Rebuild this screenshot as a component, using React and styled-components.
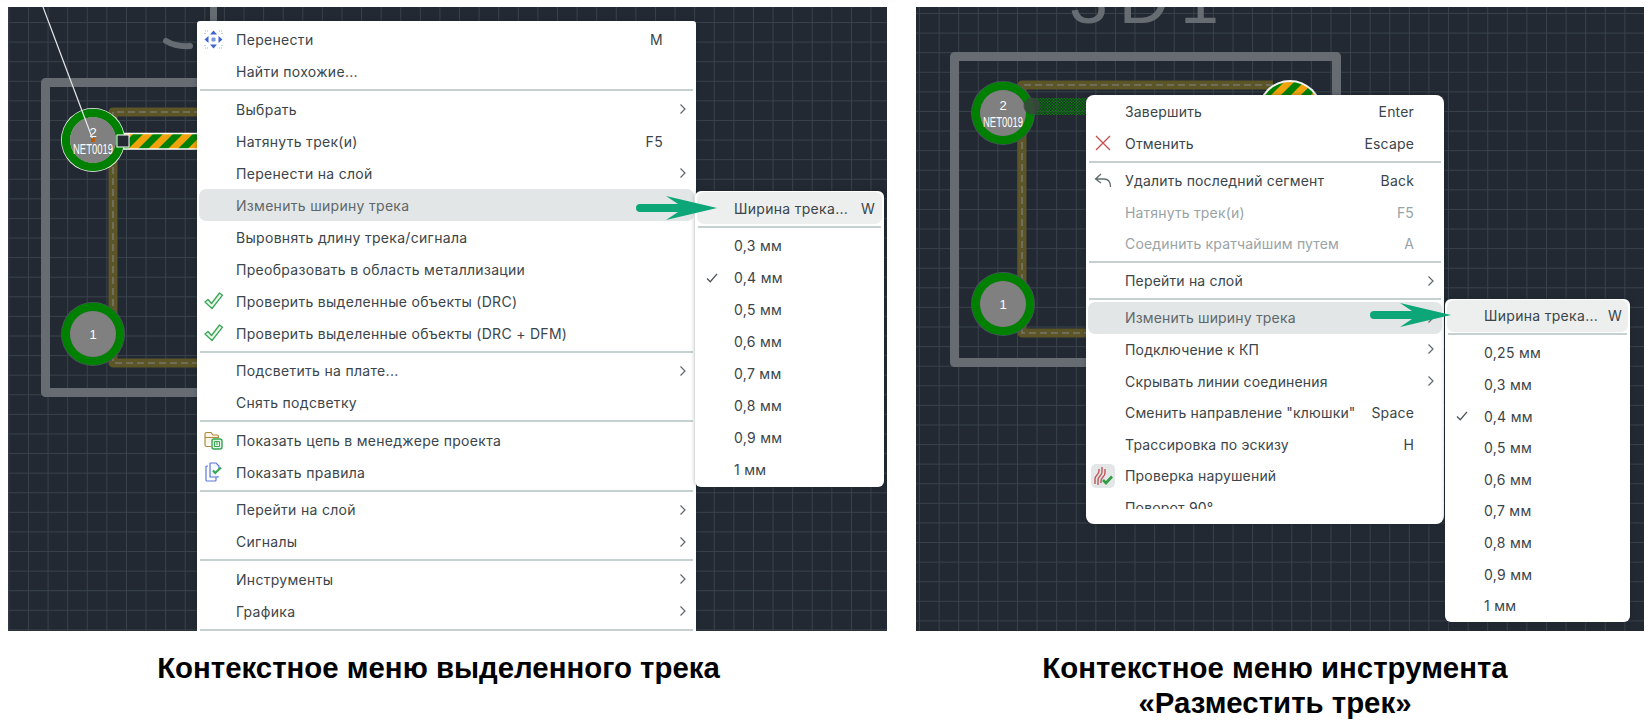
import React from "react";
import styled, { createGlobalStyle } from "styled-components";

const GlobalStyle = createGlobalStyle`
  html, body { margin: 0; padding: 0; background: #fff; }
  body { font-family: Inter, "Liberation Sans", sans-serif; }
`;

const Page = styled.div`
  display: flex;
  gap: 29px;
  width: 1648px;
  height: 725px;
  padding: 7px 4px 0 8px;
  box-sizing: border-box;
  overflow: hidden;
`;

const Panel = styled.section`
  display: flex;
  flex-direction: column;
  width: ${({ $width }) => $width}px;
  flex: none;
`;

const Canvas = styled.div`
  position: relative;
  height: 624px;
  overflow: hidden;
  background-color: #222933;
  background-image: linear-gradient(#39414a 1px, transparent 1px),
    linear-gradient(90deg, #39414a 1px, transparent 1px);
  background-size: 19.6px 19.6px;
  background-position: ${({ $grid }) => $grid};
`;

const BoardArt = styled.svg`
  position: absolute;
  inset: 0;
  width: 100%;
  height: 100%;
`;

const Caption = styled.h2`
  margin: 19px 0 0;
  padding-right: ${({ $shift }) => $shift}px;
  font: bold 29.4px/35px "Liberation Sans", Arial, sans-serif;
  color: #000;
  text-align: center;
`;

const MenuBox = styled.div`
  position: absolute;
  left: ${({ $x }) => $x}px;
  top: ${({ $y }) => $y}px;
  width: ${({ $w }) => $w}px;
  height: ${({ $h }) => ($h ? `${$h}px` : "auto")};
  padding: ${({ $padTop }) => $padTop}px 2px 1px;
  box-sizing: border-box;
  background: #fff;
  border-radius: ${({ $radius }) => $radius}px;
  box-shadow: 0 0 4px rgba(20, 30, 35, 0.35);
`;

const MenuScroll = styled.div`
  height: ${({ $h }) => ($h ? `${$h}px` : "auto")};
  overflow: hidden;
`;

const Row = styled.div`
  display: flex;
  align-items: center;
  height: ${({ $h }) => $h}px;
  font-size: 14px;
  letter-spacing: ${({ $tracking }) => $tracking}px;
  white-space: nowrap;
  border-radius: 7px;
  color: ${({ $disabled, $active }) =>
    $disabled ? "#9aa3a6" : $active === "hover" ? "#5e676b" : "#3b454a"};
  background: ${({ $active }) =>
    $active === "hover" ? "#e3e6e6" : $active === "open" ? "#edefef" : "transparent"};
`;

const IconSlot = styled.span`
  display: flex;
  align-items: center;
  justify-content: center;
  flex: none;
  width: 37px;
  padding-right: 8px;
  box-sizing: border-box;
`;

const Label = styled.span`
  flex: 1;
`;

const Shortcut = styled.span`
  margin-right: ${({ $right }) => $right}px;
`;

const ChevronSlot = styled.span`
  display: flex;
  justify-content: flex-end;
  flex: none;
  width: 30px;
  padding-right: 7px;
  box-sizing: border-box;
`;

const Divider = styled.div`
  height: 2px;
  margin: 1.75px 1px;
  background: #c5d1d0;
`;

const IconTile = styled.span`
  display: flex;
  align-items: center;
  justify-content: center;
  width: 24px;
  height: 24px;
  border-radius: 5px;
  background: #e4e7e7;
`;

const Chevron = () => (
  <svg width="8" height="12" viewBox="0 0 8 12">
    <path d="M1.5 1.5 L6 6 L1.5 10.5" fill="none" stroke="#5f686c" strokeWidth="1.2" />
  </svg>
);

const MoveIcon = () => (
  <svg width="19" height="19" viewBox="0 0 19 19">
    <path d="M9.5 0.5 L13 4.5 H6 Z M9.5 18.5 L13 14.5 H6 Z M0.5 9.5 L4.5 6 V13 Z M18.5 9.5 L14.5 6 V13 Z" fill="#3f63d0" />
    <rect x="7.5" y="7.5" width="4" height="4" rx="1" fill="#7c93de" />
    <path d="M1 1 H4 M1 3 V4 M15 1 H18 M18 3 V4 M1 18 H4 M1 15 V16 M15 18 H18 M18 15 V16" stroke="#aab2c4" strokeWidth="1.2" strokeDasharray="1 1" />
  </svg>
);

const DrcIcon = () => (
  <svg width="20" height="18" viewBox="0 0 20 18">
    <path d="M1 10 L4 7.5 L7.5 11.5 L15.5 1 L18.5 3.2 L8 16.5 Z" fill="#e9f6ea" stroke="#3aa655" strokeWidth="1.3" strokeLinejoin="round" />
  </svg>
);

const FolderIcon = () => (
  <svg width="19" height="19" viewBox="0 0 19 19">
    <path d="M1 14 V3 Q1 1.5 2.5 1.5 H7 L9 4 H13 Q14.5 4 14.5 5.5 V7 M1 6.5 H14 M1 14 Q1 15.5 2.5 15.5 H7" fill="#fbf6ea" stroke="#b08a3c" strokeWidth="1.2" />
    <rect x="8" y="8" width="10" height="10" rx="2" fill="#e6f5e8" stroke="#35a853" strokeWidth="1.4" />
    <path d="M10.5 10.5 H15.5 V15.5 H10.5 Z M13 10.5 V14" fill="none" stroke="#35a853" strokeWidth="1" />
  </svg>
);

const RulesIcon = () => (
  <svg width="18" height="20" viewBox="0 0 18 20">
    <path d="M5 1 H11 L14 4 V7 M5 1 V15 H13 V14" fill="#f2f5fd" stroke="#5b78d8" strokeWidth="1.2" />
    <path d="M3 4 H2 Q1 4 1 5 V18 Q1 19 2 19 H10 Q11 19 11 18 V15" fill="none" stroke="#5b78d8" strokeWidth="1.2" />
    <path d="M8 8.5 L10.2 11 L16 5.5" fill="none" stroke="#35a853" strokeWidth="2.2" />
  </svg>
);

const CancelIcon = () => (
  <svg width="16" height="16" viewBox="0 0 16 16">
    <path d="M1 1 L15 15 M15 1 L1 15" stroke="#c9504f" strokeWidth="1.4" />
  </svg>
);

const UndoIcon = () => (
  <svg width="18" height="15" viewBox="0 0 18 15">
    <path d="M7 1 L1.5 6 L7 10 M1.5 6 H10 C14 6 16.5 9 16.5 14" fill="none" stroke="#5f6b6e" strokeWidth="1.3" />
  </svg>
);

const ViolationIcon = () => (
  <IconTile>
    <svg width="20" height="20" viewBox="0 0 20 20">
      <path d="M2 18 V13 Q2 11 4 9 Q6 7 6 5 V3 M5 19 V14 Q5 12 7 10 Q9 8 9 6 V1 M8 17 V15 Q8 13 10 11 Q12 9 12 7 V3" fill="none" stroke="#c0565a" strokeWidth="1.4" />
      <path d="M10 14 L13 17 L19 10.5" fill="none" stroke="#2f9e44" strokeWidth="2.6" />
    </svg>
  </IconTile>
);

const TickIcon = () => (
  <svg width="12" height="10" viewBox="0 0 13 11">
    <path d="M1 6 L4.6 9.5 L12 1" fill="none" stroke="#4e5659" strokeWidth="1.5" />
  </svg>
);

const Menu = ({ sections, x, y, w, h, padTop, radius, rowH, listH, right, tracking = 0.3 }) => (
  <MenuBox $x={x} $y={y} $w={w} $h={h} $padTop={padTop} $radius={radius}>
    <MenuScroll $h={listH}>
      {sections.map((rows, i) => (
        <React.Fragment key={i}>
          {i > 0 && <Divider />}
          {rows.map((row) => (
            <Row key={row.label} $h={rowH} $tracking={tracking} $active={row.active} $disabled={row.disabled}>
              <IconSlot>{row.icon}</IconSlot>
              <Label>{row.label}</Label>
              {row.key && <Shortcut $right={right}>{row.key}</Shortcut>}
              {row.more && <ChevronSlot><Chevron /></ChevronSlot>}
            </Row>
          ))}
        </React.Fragment>
      ))}
    </MenuScroll>
  </MenuBox>
);

const trackMenu = [
  [
    { label: "Перенести", icon: <MoveIcon />, key: "M" },
    { label: "Найти похожие..." },
  ],
  [
    { label: "Выбрать", more: true },
    { label: "Натянуть трек(и)", key: "F5" },
    { label: "Перенести на слой", more: true },
    { label: "Изменить ширину трека", active: "hover", more: true },
    { label: "Выровнять длину трека/сигнала" },
    { label: "Преобразовать в область металлизации" },
    { label: "Проверить выделенные объекты (DRC)", icon: <DrcIcon /> },
    { label: "Проверить выделенные объекты (DRC + DFM)", icon: <DrcIcon /> },
  ],
  [
    { label: "Подсветить на плате...", more: true },
    { label: "Снять подсветку" },
  ],
  [
    { label: "Показать цепь в менеджере проекта", icon: <FolderIcon /> },
    { label: "Показать правила", icon: <RulesIcon /> },
  ],
  [
    { label: "Перейти на слой", more: true },
    { label: "Сигналы", more: true },
  ],
  [
    { label: "Инструменты", more: true },
    { label: "Графика", more: true },
  ],
  [],
];

const toolMenu = [
  [
    { label: "Завершить", key: "Enter" },
    { label: "Отменить", icon: <CancelIcon />, key: "Escape" },
  ],
  [
    { label: "Удалить последний сегмент", icon: <UndoIcon />, key: "Back" },
    { label: "Натянуть трек(и)", key: "F5", disabled: true },
    { label: "Соединить кратчайшим путем", key: "A", disabled: true },
  ],
  [{ label: "Перейти на слой", more: true }],
  [
    { label: "Изменить ширину трека", active: "hover", more: true },
    { label: "Подключение к КП", more: true },
    { label: "Скрывать линии соединения", more: true },
    { label: 'Сменить направление "клюшки"', key: "Space" },
    { label: "Трассировка по эскизу", key: "H" },
    { label: "Проверка нарушений", icon: <ViolationIcon /> },
    { label: "Поворот 90°" },
  ],
];

const widthMenu = (sizes) => [
  [{ label: "Ширина трека...", key: "W", active: "open" }],
  sizes.map((size) => ({
    label: size,
    icon: size === "0,4 мм" ? <TickIcon /> : null,
  })),
];

const Pad = ({ x, y, ring, label, net }) => (
  <g>
    <circle cx={x} cy={y} r="32" fill={ring} />
    <circle cx={x} cy={y} r="27" fill="none" stroke="#008000" strokeWidth="8.5" />
    <circle cx={x} cy={y} r="23" fill="#808080" />
    <text
      x={x}
      y={net ? y - 3 : y + 5}
      fill="#fff"
      fontSize="13"
      fontFamily="Liberation Sans, sans-serif"
      textAnchor="middle"
    >
      {label}
    </text>
    {net && (
      <text
        x={x - 20}
        y={y + 14}
        fill="#fff"
        fontSize="15"
        fontFamily="Liberation Sans, sans-serif"
        textLength="40"
        lengthAdjust="spacingAndGlyphs"
      >
        {net}
      </text>
    )}
  </g>
);

const Patterns = () => (
  <defs>
    <pattern id="stripes" width="14" height="14" patternUnits="userSpaceOnUse" patternTransform="rotate(45)">
      <rect width="14" height="14" fill="#008000" />
      <rect width="7" height="14" fill="#f0a30a" />
    </pattern>
    <pattern id="checker" width="3" height="3" patternUnits="userSpaceOnUse">
      <rect width="1.5" height="1.5" fill="#008000" />
      <rect x="1.5" y="1.5" width="1.5" height="1.5" fill="#008000" />
    </pattern>
  </defs>
);

const OliveTrack = ({ d }) => (
  <g fill="none">
    <path d={d} stroke="#5c5527" strokeWidth="9" strokeLinejoin="round" />
    <path d={d} stroke="#77756a" strokeWidth="1.6" strokeDasharray="7 4" />
  </g>
);

const LeftBoard = () => (
  <BoardArt viewBox="8 7 879 624">
    <Patterns />
    <path d="M166 41 Q176 47 190 46" fill="none" stroke="#666c72" strokeWidth="6" strokeLinecap="round" />
    <rect x="210" y="7" width="7" height="14" fill="#666c72" />
    <rect x="45.5" y="82.5" width="300" height="310" fill="none" stroke="#666c72" strokeWidth="9" strokeLinejoin="round" />
    <OliveTrack d="M300 112 H113 V363 H300" />
    <rect x="116" y="133.5" width="100" height="15.5" fill="url(#stripes)" stroke="#fff" strokeWidth="1.5" />
    <Pad x={93} y={140} ring="#f4f4f4" label="2" net="NET0019" />
    <Pad x={93} y={334} ring="#4b5462" label="1" />
    <rect x="117" y="135" width="12" height="12" fill="#222933" stroke="#fff" strokeWidth="1" />
    <path d="M43 7 L93 140" stroke="#e8e8e8" strokeWidth="1.2" />
    <rect x="91" y="138" width="4" height="4" fill="#b85c10" />
  </BoardArt>
);

const RightBoard = () => (
  <BoardArt viewBox="916 7 728 624">
    <Patterns />
    <text
      x="1069"
      y="23"
      fontSize="70"
      fontFamily="Liberation Sans, sans-serif"
      fill="#666c72"
      textLength="150"
    >
      3D1
    </text>
    <rect x="954.5" y="56.5" width="382" height="306" fill="none" stroke="#666c72" strokeWidth="9" strokeLinejoin="round" />
    <OliveTrack d="M1273 85 H1022 V333 H1100" />
    <circle cx="1290" cy="112" r="32" fill="#f4f4f4" />
    <circle cx="1290" cy="112" r="30" fill="url(#stripes)" />
    <rect x="1023" y="98" width="70" height="17" fill="url(#checker)" />
    <Pad x={1003} y={113} ring="#4b5462" label="2" net="NET0019" />
    <circle cx="1032" cy="106" r="8.5" fill="#3c4440" opacity="0.8" />
    <Pad x={1003} y={304} ring="#4b5462" label="1" />
  </BoardArt>
);

const Arrow = ({ x, y }) => (
  <path
    transform={`translate(${x} ${y})`}
    d="M4 -4 H42 L30 -12 L81 0 L30 12 L42 4 H4 A4 4 0 0 1 4 -4 Z"
    fill="#0ca678"
  />
);

const ArrowLayer = styled.svg`
  position: absolute;
  inset: 0;
  width: 100%;
  height: 100%;
  pointer-events: none;
`;

export default function App() {
  return (
    <>
      <GlobalStyle />
      <Page>
        <Panel $width={879}>
          <Canvas $grid="0.4px 15px">
            <LeftBoard />
            <Menu sections={trackMenu} x={189} y={14} w={499} padTop={2.5} radius={3} rowH={32} right={31} />
            <Menu
              sections={widthMenu(["0,3 мм", "0,4 мм", "0,5 мм", "0,6 мм", "0,7 мм", "0,8 мм", "0,9 мм", "1 мм"])}
              x={687}
              y={184}
              w={189}
              padTop={1}
              radius={6}
              rowH={32}
              right={7}
            />
            <ArrowLayer viewBox="8 7 879 624">
              <Arrow x={636} y={208} />
            </ArrowLayer>
          </Canvas>
          <Caption $shift={18}>Контекстное меню выделенного трека</Caption>
        </Panel>
        <Panel $width={728}>
          <Canvas $grid="3px 6px">
            <RightBoard />
            <Menu sections={toolMenu} x={170} y={88} w={358} h={429} padTop={1} radius={8} rowH={31.6} listH={413} right={28} tracking={0.17} />
            <Menu
              sections={widthMenu(["0,25 мм", "0,3 мм", "0,4 мм", "0,5 мм", "0,6 мм", "0,7 мм", "0,8 мм", "0,9 мм", "1 мм"])}
              x={529}
              y={292}
              w={185}
              padTop={1}
              radius={6}
              rowH={31.6}
              right={6}
            />
            <ArrowLayer viewBox="916 7 728 624">
              <Arrow x={1370} y={315} />
            </ArrowLayer>
          </Canvas>
          <Caption $shift={10}>
            Контекстное меню инструмента
            <br />
            «Разместить трек»
          </Caption>
        </Panel>
      </Page>
    </>
  );
}
